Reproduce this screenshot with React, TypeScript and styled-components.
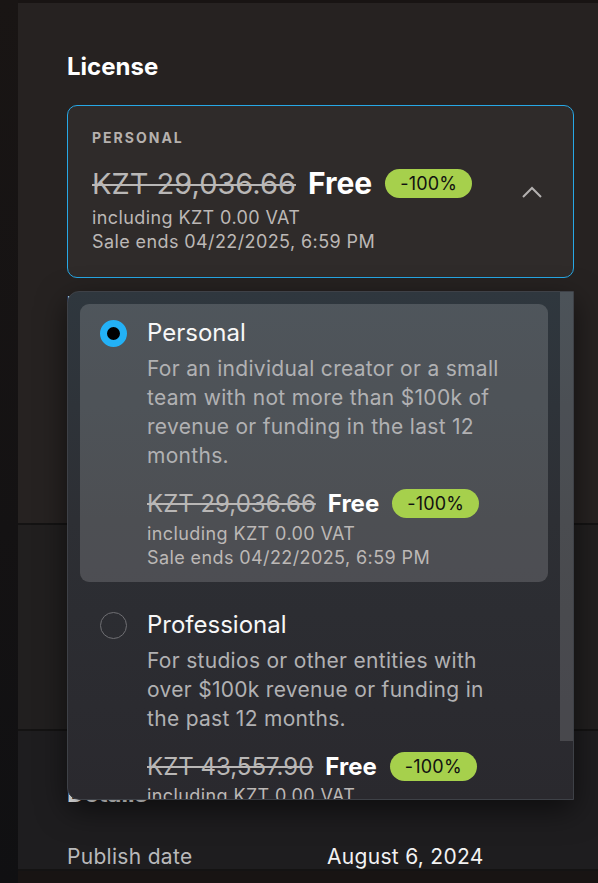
import React from 'react';
import styled, { createGlobalStyle } from 'styled-components';

const GlobalStyle = createGlobalStyle`
    html, body {
        margin: 0;
        padding: 0;
        background: #181413;
        font-family: Inter, "Noto Sans", sans-serif;
        overflow: hidden;
    }
    * {
        box-sizing: border-box;
    }
`;

const Page = styled.div`
    display: flex;
    width: 598px;
    height: 883px;
    overflow: hidden;
    background: #181413;
`;

const SideStrip = styled.div`
    width: 18px;
    flex-shrink: 0;
    background: linear-gradient(180deg, #191514 0%, #141213 60%, #101012 100%);
`;

const Main = styled.main`
    flex: 1;
    display: flex;
    flex-direction: column;
    margin-top: 3px;
`;

const Section = styled.section<{ $bg: string; $height?: number }>`
    display: flex;
    flex-direction: column;
    flex-shrink: 0;
    padding: 0 24px 0 49px;
    background: ${p => p.$bg};
    ${p => (p.$height ? `height: ${p.$height}px;` : '')}
    border-bottom: 2px solid #141313;
`;

const Heading = styled.h2<{ $top?: number }>`
    margin: 0;
    padding-top: ${p => p.$top ?? 49}px;
    font-size: 24px;
    line-height: 30px;
    font-weight: 700;
    color: #ffffff;
`;

const LicenseArea = styled.div`
    position: relative;
    margin-top: 23px;
`;

const LicenseBox = styled.div`
    display: flex;
    align-items: center;
    height: 173px;
    padding: 0 30px 0 24px;
    border: 1px solid #27a8e6;
    border-radius: 10px;
    background: #2f2b2a;
`;

const BoxBody = styled.div`
    flex: 1;
    display: flex;
    flex-direction: column;
`;

const Label = styled.div`
    font-size: 14px;
    line-height: 18px;
    font-weight: 700;
    letter-spacing: 2px;
    color: #b6b1ae;
`;

const PriceRow = styled.div<{ $big?: boolean }>`
    display: flex;
    align-items: center;
    gap: 12px;
    height: 36px;
    margin-top: ${p => (p.$big ? 18.5 : 15.5)}px;
    margin-bottom: ${p => (p.$big ? 5 : 0)}px;
`;

const OldPrice = styled.span<{ $big?: boolean }>`
    font-size: ${p => (p.$big ? 29 : 24)}px;
    color: #b9b7b6;
    text-decoration: line-through;
    text-decoration-thickness: 2px;
`;

const FreeLabel = styled.span<{ $big?: boolean }>`
    font-size: ${p => (p.$big ? 30 : 24)}px;
    font-weight: 700;
    color: #ffffff;
`;

const Badge = styled.span`
    display: inline-flex;
    align-items: center;
    height: 29px;
    padding: 0 15px;
    margin-left: 1px;
    border-radius: 15px;
    background: #a6d04c;
    color: #111111;
    font-size: 18px;
    letter-spacing: 0.2px;
`;

const Note = styled.div`
    font-size: 18px;
    line-height: 24px;
    letter-spacing: 0.4px;
    color: #bcb8b6;
    white-space: nowrap;
`;

const Chevron = styled.svg`
    width: 22px;
    height: 14px;
    flex-shrink: 0;
`;

const BehindText = styled.div`
    margin-top: 14px;
    font-size: 18px;
    font-weight: 700;
    color: #e8e8e8;
`;

const Dropdown = styled.div`
    position: absolute;
    top: 186px;
    left: 0;
    right: 0;
    height: 509px;
    display: flex;
    overflow: hidden;
    border: 1px solid #3e4147;
    border-radius: 12px 0 0 12px;
    background: linear-gradient(180deg, #2f373e 0%, #2d2f34 45%, #2a292e 100%);
    box-shadow: 0 10px 30px rgba(0, 0, 0, 0.55);
    z-index: 5;
`;

const OptionList = styled.div`
    flex: 1;
    display: flex;
    flex-direction: column;
    gap: 14px;
    padding: 12px;
    overflow: hidden;
`;

const ScrollTrack = styled.div`
    width: 13px;
    flex-shrink: 0;
`;

const ScrollThumb = styled.div`
    height: 449px;
    background: rgba(255, 255, 255, 0.14);
`;

const Option = styled.div<{ $selected?: boolean }>`
    display: grid;
    grid-template-columns: 27px 1fr;
    column-gap: 20px;
    flex-shrink: 0;
    padding: 14px 20px 12px 20px;
    border-radius: 9px;
    background: ${p => (p.$selected ? 'rgba(255, 255, 255, 0.155)' : 'transparent')};
`;

const Radio = styled.span<{ $checked?: boolean }>`
    width: 27px;
    height: 27px;
    margin-top: 2px;
    border-radius: 50%;
    ${p =>
        p.$checked
            ? 'border: 7.5px solid #23b1f6; background: #000;'
            : 'border: 1.5px solid #6f6f73; background: transparent;'}
`;

const OptionBody = styled.div`
    display: flex;
    flex-direction: column;
`;

const OptionTitle = styled.div`
    font-size: 24px;
    line-height: 30px;
    color: #f7f7f7;
`;

const OptionDesc = styled.div`
    margin-top: 6px;
    font-size: 21px;
    line-height: 29px;
    letter-spacing: 0.3px;
    color: #b1b1b3;
    max-width: 362px;
`;

const DetailRow = styled.div`
    display: grid;
    grid-template-columns: 260px 1fr;
    margin-top: 35px;
    font-size: 21px;
    letter-spacing: 0.3px;
    color: #b9b9bb;
`;

const DetailValue = styled.span`
    color: #f2f2f2;
`;

type Plan = {
    name: string;
    desc: string;
    price: string;
    selected?: boolean;
};

const PLANS: Plan[] = [
    {
        name: 'Personal',
        desc: 'For an individual creator or a small team with not more than $100k of revenue or funding in the last 12 months.',
        price: 'KZT 29,036.66',
        selected: true,
    },
    {
        name: 'Professional',
        desc: 'For studios or other entities with over $100k revenue or funding in the past 12 months.',
        price: 'KZT 43,557.90',
    },
];

const SALE_ENDS = 'Sale ends 04/22/2025, 6:59 PM';
const VAT = 'including KZT 0.00 VAT';

const App = () => {
    return (
        <>
            <GlobalStyle />
            <Page>
                <SideStrip />
                <Main>
                    <Section $bg="#262221" $height={522}>
                        <Heading>License</Heading>
                        <LicenseArea>
                            <LicenseBox>
                                <BoxBody>
                                    <Label>PERSONAL</Label>
                                    <PriceRow $big>
                                        <OldPrice $big>KZT 29,036.66</OldPrice>
                                        <FreeLabel $big>Free</FreeLabel>
                                        <Badge>-100%</Badge>
                                    </PriceRow>
                                    <Note>{VAT}</Note>
                                    <Note>{SALE_ENDS}</Note>
                                </BoxBody>
                                <Chevron viewBox="0 0 22 14" fill="none">
                                    <path d="M2 12 L11 3 L20 12" stroke="#b4b1b0" strokeWidth="2" />
                                </Chevron>
                            </LicenseBox>
                            <BehindText>Learn more about licenses</BehindText>
                            <Dropdown>
                                <OptionList>
                                    {PLANS.map(plan => (
                                        <Option key={plan.name} $selected={plan.selected}>
                                            <Radio $checked={plan.selected} />
                                            <OptionBody>
                                                <OptionTitle>{plan.name}</OptionTitle>
                                                <OptionDesc>{plan.desc}</OptionDesc>
                                                <PriceRow>
                                                    <OldPrice>{plan.price}</OldPrice>
                                                    <FreeLabel>Free</FreeLabel>
                                                    <Badge>-100%</Badge>
                                                </PriceRow>
                                                <Note>{VAT}</Note>
                                                <Note>{SALE_ENDS}</Note>
                                            </OptionBody>
                                        </Option>
                                    ))}
                                </OptionList>
                                <ScrollTrack>
                                    <ScrollThumb />
                                </ScrollTrack>
                            </Dropdown>
                        </LicenseArea>
                    </Section>
                    <Section $bg="#211f1f" $height={206} />
                    <Section $bg="#1e1d1f">
                        <Heading as="h3" $top={48}>Details</Heading>
                        <DetailRow>
                            <span>Publish date</span>
                            <DetailValue>August 6, 2024</DetailValue>
                        </DetailRow>
                    </Section>
                </Main>
            </Page>
        </>
    );
};

export default App;
